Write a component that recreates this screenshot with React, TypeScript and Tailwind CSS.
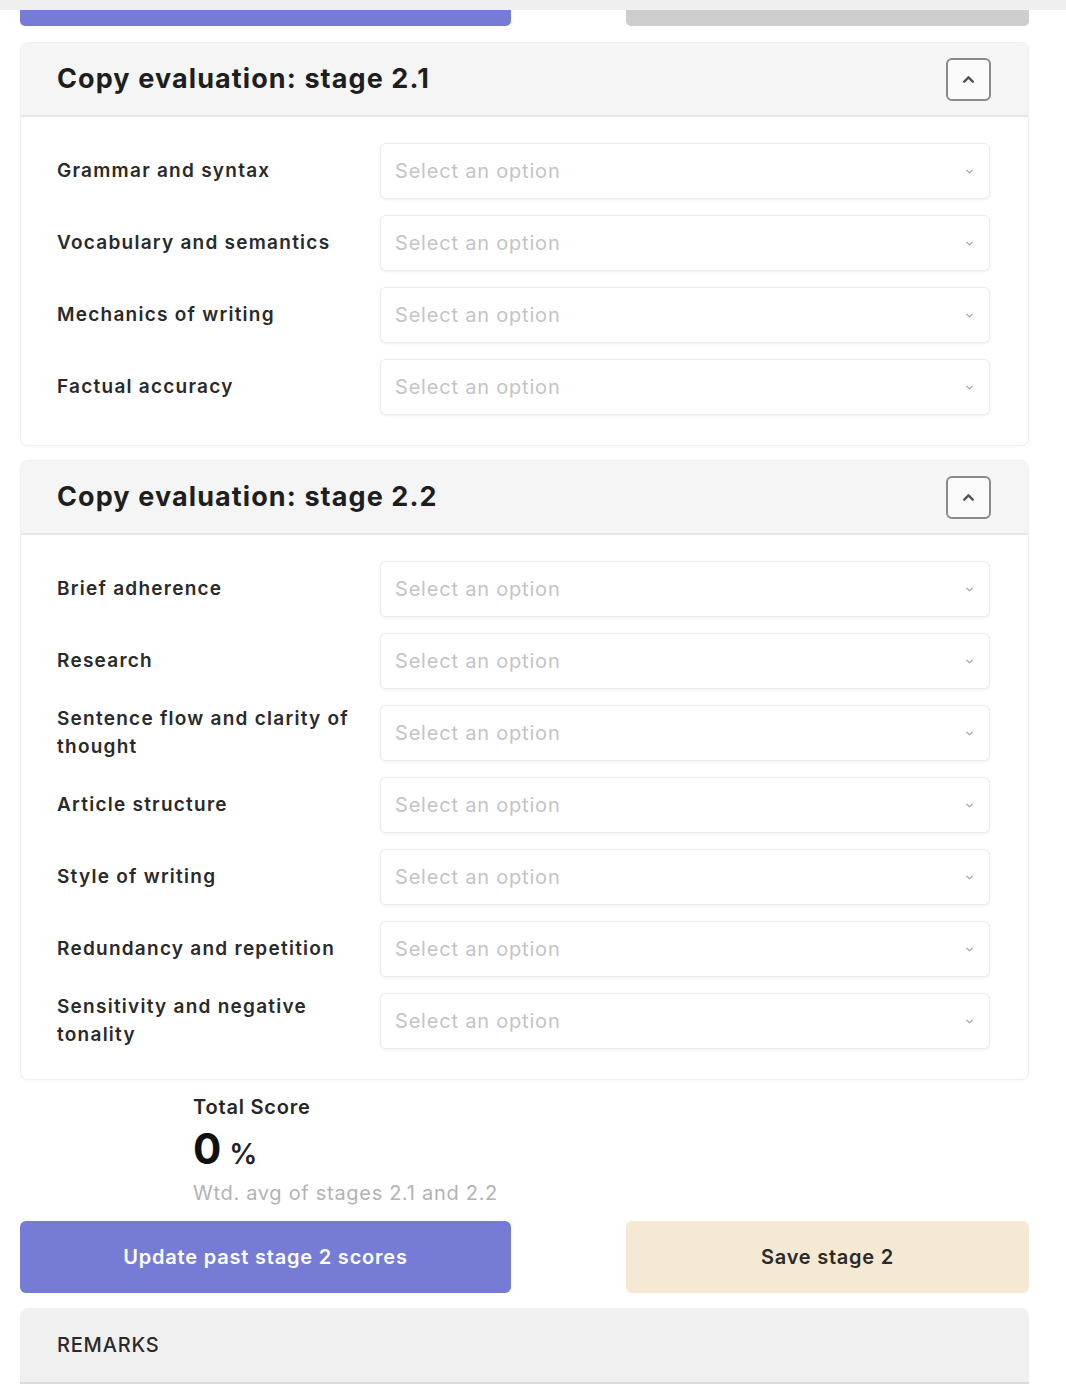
import React from "react";

const stage21 = [
  "Grammar and syntax",
  "Vocabulary and semantics",
  "Mechanics of writing",
  "Factual accuracy",
];

const stage22 = [
  "Brief adherence",
  "Research",
  "Sentence flow and clarity of thought",
  "Article structure",
  "Style of writing",
  "Redundancy and repetition",
  "Sensitivity and negative tonality",
];

function ChevronUp() {
  return (
    <svg width="17" height="17" viewBox="0 0 24 24" fill="none" stroke="#555" strokeWidth="3.4" strokeLinecap="round" strokeLinejoin="round">
      <path d="M6 15l6-6 6 6" />
    </svg>
  );
}

function ChevronDown() {
  return (
    <svg width="11" height="11" viewBox="0 0 24 24" fill="none" stroke="#a8a8a8" strokeWidth="3" strokeLinecap="round" strokeLinejoin="round">
      <path d="M6 9l6 6 6-6" />
    </svg>
  );
}

function Row({ label }: { label: string }) {
  return (
    <div className="flex items-center h-[56px]">
      <div className="w-[323px] pr-4 text-[19px] leading-[28px] font-semibold tracking-[1.25px] text-[#2a2a2a]">{label}</div>
      <div className="flex-1 h-[56px] flex items-center justify-between rounded-[6px] border border-[#ebebeb] bg-white shadow-[0_1px_3px_rgba(0,0,0,0.06)] pl-[14px] pr-[14px]">
        <span className="text-[20px] tracking-[0.8px] text-[#c4c4c4]">Select an option</span>
        <ChevronDown />
      </div>
    </div>
  );
}

function Section({ title, items }: { title: string; items: string[] }) {
  return (
    <div className="rounded-[8px] border border-[#f0f0f0] bg-white shadow-[0_1px_3px_rgba(0,0,0,0.04)] overflow-hidden">
      <div className="h-[74px] bg-[#f5f5f5] border-b-2 border-[#e6e6e6] flex items-center justify-between pl-[36px] pr-[37px]">
        <h2 className="text-[27px] font-bold text-[#1e1e1e] tracking-[1.1px]">{title}</h2>
        <button className="w-[45px] h-[43px] rounded-[6px] border-2 border-[#8a8a8a] bg-[#fafafa] flex items-center justify-center">
          <ChevronUp />
        </button>
      </div>
      <div className="pl-[36px] pr-[38px] pt-[26px] pb-[30px] flex flex-col gap-[16px]">
        {items.map((l) => (
          <Row key={l} label={l} />
        ))}
      </div>
    </div>
  );
}

export default function App() {
  return (
    <div className="w-[1066px] min-h-[1389px] bg-white overflow-hidden" style={{ fontFamily: "Inter, 'Noto Sans', sans-serif" }}>
      <div className="h-[10px] bg-[#efefef]" />
      <div className="pl-[20px] w-[1029px]">
        <div className="flex justify-between">
          <div className="w-[491px] h-[16px] bg-[#767cd6] rounded-b-[5px]" />
          <div className="w-[403px] h-[16px] bg-[#cdcdcd] rounded-b-[5px]" />
        </div>
        <div className="mt-[16px]">
          <Section title="Copy evaluation: stage 2.1" items={stage21} />
        </div>
        <div className="mt-[14px]">
          <Section title="Copy evaluation: stage 2.2" items={stage22} />
        </div>
        <div className="pl-[173px] pt-[13px]">
          <div className="text-[20px] font-semibold tracking-[0.8px] text-[#262626] leading-[28px]">Total Score</div>
          <div className="flex items-baseline mt-[4px] leading-[48px]">
            <span className="text-[42px] font-bold text-[#111]">0</span>
            <span className="text-[28px] font-semibold text-[#222] ml-[8px]">%</span>
          </div>
          <div className="text-[20px] tracking-[0.7px] text-[#b3b3b3] mt-[1px] leading-[28px]">Wtd. avg of stages 2.1 and 2.2</div>
        </div>
        <div className="flex justify-between mt-[14px]">
          <button className="w-[491px] h-[72px] rounded-[6px] bg-[#767cd6] text-white text-[20px] font-semibold tracking-[0.8px]">
            Update past stage 2 scores
          </button>
          <button className="w-[403px] h-[72px] rounded-[6px] bg-[#f5e9d3] text-[#2a2a2a] text-[20px] font-semibold tracking-[0.75px]">
            Save stage 2
          </button>
        </div>
        <div className="mt-[15px] h-[76px] bg-[#f0f0f0] rounded-t-[8px] border-b-2 border-[#dcdcdc] flex items-center pl-[37px]">
          <span className="text-[20px] font-medium tracking-[0.8px] text-[#2a2a2a]">REMARKS</span>
        </div>
      </div>
    </div>
  );
}
